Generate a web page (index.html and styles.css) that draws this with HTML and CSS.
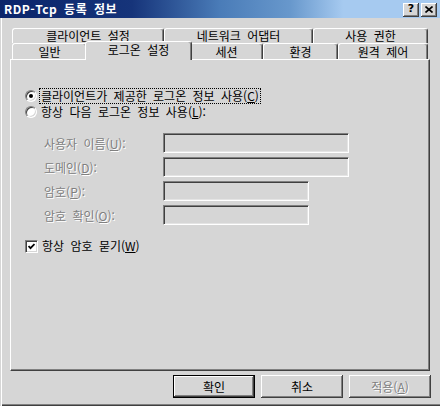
FILE: index.html
```html
<!DOCTYPE html>
<html lang="ko">

<head>
    <meta charset="UTF-8">
    <title>RDP-Tcp 등록 정보</title>
    <link rel="stylesheet" href="styles.css">
</head>

<body>
    <div class="window">
        <div class="titlebar">
            <span class="title">RDP-Tcp 등록 정보</span>
            <div class="title-buttons">
                <span class="tbtn help">?</span>
                <span class="tbtn close">
                    <svg width="8" height="7" viewBox="0 0 8 7">
                        <path d="M0.5 0.5 L7.5 6.5 M7.5 0.5 L0.5 6.5" stroke="#000" stroke-width="1.6" fill="none"/>
                    </svg>
                </span>
            </div>
        </div>

        <div class="content">
            <div class="tabs">
                <div class="tab-row back">
                    <div class="tab tab-client">클라이언트 설정</div>
                    <div class="tab tab-network">네트워크 어댑터</div>
                    <div class="tab tab-perm">사용 권한</div>
                </div>
                <div class="tab-row front">
                    <div class="tab tab-general">일반</div>
                    <div class="tab tab-logon selected">로그온 설정</div>
                    <div class="tab tab-session">세션</div>
                    <div class="tab tab-env">환경</div>
                    <div class="tab tab-remote">원격 제어</div>
                </div>
            </div>

            <div class="panel">
                <div class="option">
                    <span class="radio checked"></span>
                    <span class="option-text focus">클라이언트가 제공한 로그온 정보 사용(<u>C</u>)</span>
                </div>
                <div class="option">
                    <span class="radio"></span>
                    <span class="option-text">항상 다음 로그온 정보 사용(<u>L</u>):</span>
                </div>

                <div class="fields">
                    <span class="field-label">사용자 이름(<u>U</u>):</span>
                    <span class="input wide"></span>
                    <span class="field-label">도메인(<u>D</u>):</span>
                    <span class="input wide"></span>
                    <span class="field-label">암호(<u>P</u>):</span>
                    <span class="input narrow"></span>
                    <span class="field-label">암호 확인(<u>O</u>):</span>
                    <span class="input narrow"></span>
                </div>

                <div class="option check-row">
                    <span class="checkbox">
                        <svg width="7" height="7" viewBox="0 0 7 7">
                            <path d="M0.5 3 L2.5 5.2 L6.5 1" stroke="#000" stroke-width="1.8" fill="none"/>
                        </svg>
                    </span>
                    <span class="option-text">항상 암호 묻기(<u>W</u>)</span>
                </div>
            </div>

            <div class="buttons">
                <button class="btn default">확인</button>
                <button class="btn">취소</button>
                <button class="btn disabled">적용(<u>A</u>)</button>
            </div>
        </div>
    </div>
</body>
</html>
```

FILE: styles.css
```css
body {
    margin: 0;
    font-family: "Noto Sans CJK KR", "DejaVu Sans", sans-serif;
    font-size: 12px;
    word-spacing: 3px;
    background: #d6d6d6;
}
.window {
    width: 440px;
    height: 406px;
    box-sizing: border-box;
    background: #d6d6d6;
    display: flex;
    flex-direction: column;
    box-shadow: inset 1px 0 #d6d6d6, inset 2px 0 #fff, inset 0 -1px #404040, inset 0 -2px #808080;
}
.titlebar {
    height: 18px;
    display: flex;
    align-items: center;
    justify-content: space-between;
    padding: 0 3px 0 4px;
    background: linear-gradient(to right, #0a246a 0%, #16347a 30%, #4a7cb8 50%, #6898cc 66%, #a6caf0 78%, #a6caf0 100%);
}
.title {
    color: #fff;
    font-weight: bold;
    font-size: 12px;
    line-height: 18px;
    letter-spacing: 0.5px;
}
.title-buttons {
    display: flex;
    gap: 2px;
    margin-top: 1px;
}
.tbtn {
    width: 16px;
    height: 14px;
    box-sizing: border-box;
    background: #d6d6d6;
    display: flex;
    align-items: center;
    justify-content: center;
    box-shadow: inset -1px -1px #404040, inset 1px 1px #fff, inset -2px -2px #808080;
}
.help {
    font-family: "DejaVu Sans", sans-serif;
    font-weight: bold;
    font-size: 11px;
    line-height: 14px;
    padding-bottom: 1px;
}
.content {
    flex: 1;
    display: flex;
    flex-direction: column;
    padding: 10px 10px 0 10px;
}
.tabs {
    padding-left: 2px;
}
.tab-row {
    display: flex;
    height: 15px;
    width: 416px;
}
.tab-row.front {
    height: 16px;
    align-items: flex-start;
}
.tab {
    height: 15px;
    box-sizing: border-box;
    background: #d6d6d6;
    border-top: 1px solid #fff;
    border-left: 1px solid #fff;
    border-right: 1px solid #404040;
    border-radius: 3px 3px 0 0;
    box-shadow: inset -1px 0 #808080;
    text-align: center;
    line-height: 14px;
    white-space: nowrap;
}
.front .tab {
    height: 16px;
    line-height: 15px;
}
.tab-client { width: 152px; }
.tab-network { width: 149px; }
.tab-perm { width: 115px; }
.tab-general { width: 75px; }
.tab-logon { width: 103px; }
.tab-session { width: 73px; }
.tab-env { width: 75px; }
.tab-remote { width: 90px; }
.tab.selected {
    position: relative;
    z-index: 2;
    height: 19px;
    margin: -2px -2px 0 -2px;
    width: 107px;
    line-height: 15px;
}
.panel {
    height: 312px;
    box-sizing: border-box;
    border-top: 1px solid #fff;
    border-left: 1px solid #fff;
    border-right: 1px solid #404040;
    border-bottom: 1px solid #404040;
    box-shadow: inset -1px -1px #808080;
    padding: 28px 0 0 14px;
}
.option {
    display: flex;
    align-items: center;
    height: 16px;
    gap: 2px;
}
.option-text {
    line-height: 14px;
    border: 1px dotted transparent;
    padding: 0 1px;
    white-space: nowrap;
}
.option-text.focus {
    border-color: #000;
}
.radio {
    width: 12px;
    height: 12px;
    box-sizing: border-box;
    border-radius: 50%;
    background: #fff;
    border: 1px solid;
    border-color: #808080 #fff #fff #808080;
    box-shadow: inset 1px 1px #404040, inset -1px -1px #d6d6d6;
    display: flex;
    align-items: center;
    justify-content: center;
}
.radio.checked::after {
    content: "";
    width: 4px;
    height: 4px;
    border-radius: 50%;
    background: #000;
}
.fields {
    display: grid;
    grid-template-columns: 119px auto;
    row-gap: 4px;
    align-items: center;
    margin: 13px 0 0 19px;
}
.field-label {
    color: #808080;
    text-shadow: 1px 1px #fff;
    white-space: nowrap;
}
.input {
    height: 20px;
    box-sizing: border-box;
    justify-self: start;
    border: 1px solid;
    border-color: #808080 #fff #fff #808080;
    box-shadow: inset 1px 1px #404040, inset -1px -1px #e4e4e4;
    background: #d6d6d6;
}
.input.wide { width: 186px; }
.input.narrow { width: 146px; }
.check-row {
    margin-top: 13px;
}
.checkbox {
    width: 13px;
    height: 13px;
    box-sizing: border-box;
    background: #fff;
    border: 1px solid;
    border-color: #808080 #fff #fff #808080;
    box-shadow: inset 1px 1px #404040, inset -1px -1px #d6d6d6;
    display: flex;
    align-items: center;
    justify-content: center;
}
.buttons {
    display: flex;
    justify-content: flex-end;
    gap: 6px;
    margin: 4px -1px 0 0;
}
.btn {
    width: 82px;
    height: 23px;
    box-sizing: border-box;
    padding: 0;
    border: none;
    background: #d6d6d6;
    font-family: inherit;
    font-size: 12px;
    word-spacing: 3px;
    color: #000;
    box-shadow: inset -1px -1px #404040, inset 1px 1px #fff, inset -2px -2px #808080;
}
.btn.default {
    border: 1px solid #000;
}
.btn.disabled {
    color: #808080;
    text-shadow: 1px 1px #fff;
}
```
